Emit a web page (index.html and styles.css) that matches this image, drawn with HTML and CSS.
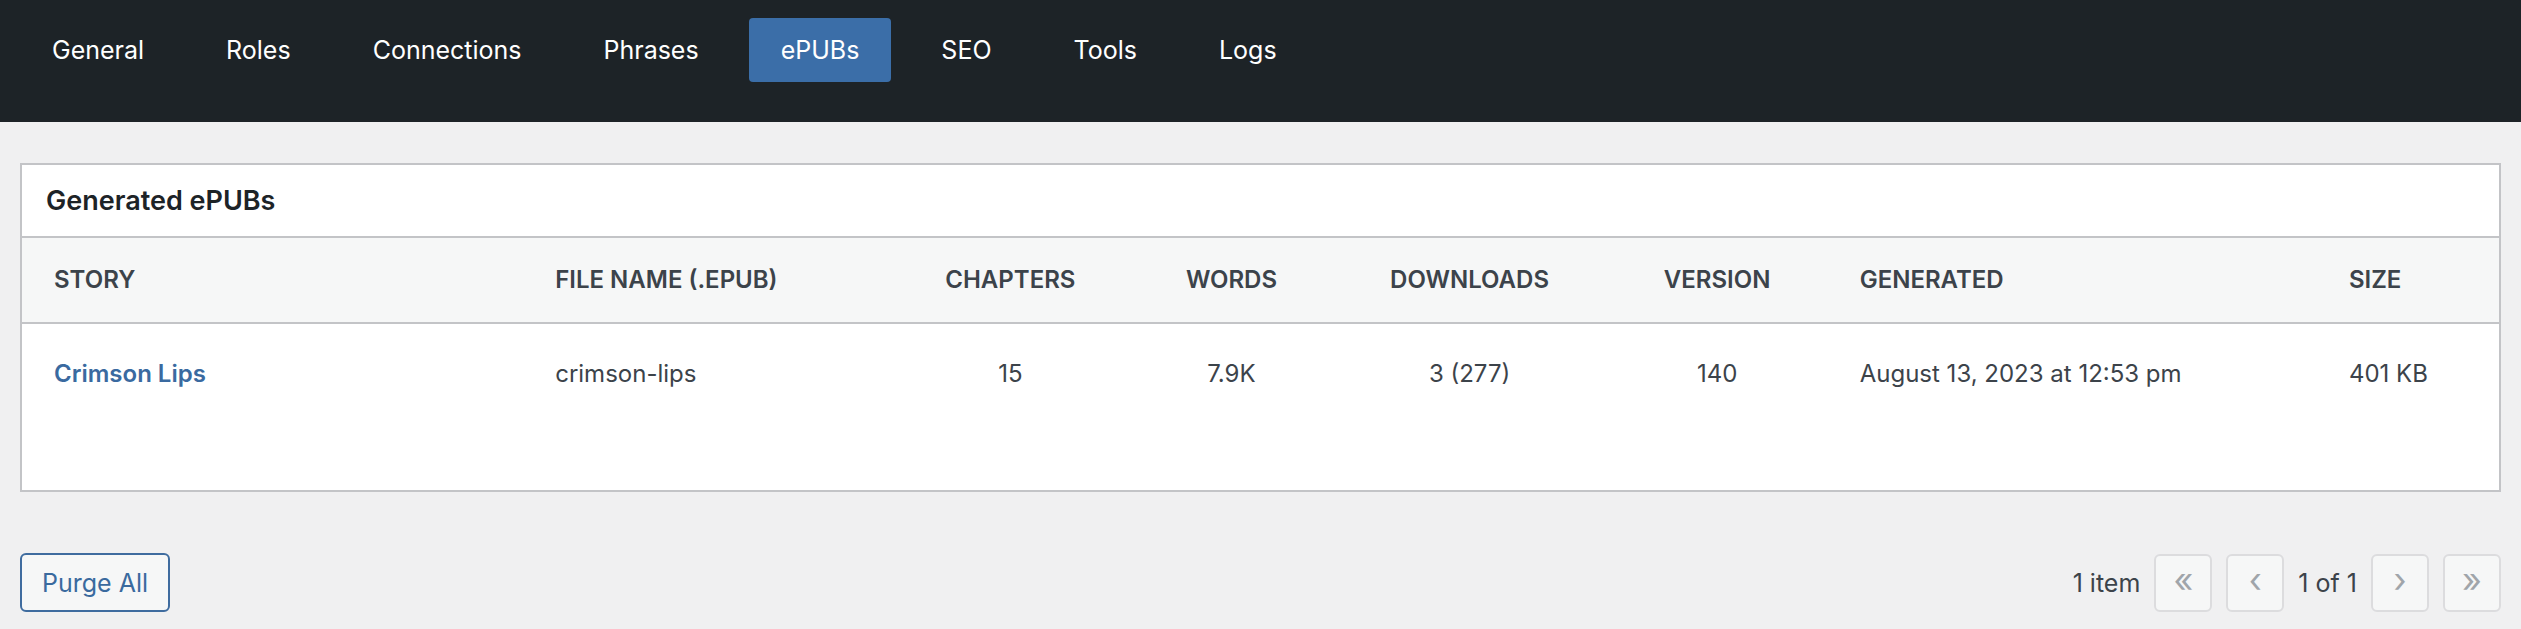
FILE: index.html
```html
<!DOCTYPE html>
<html lang="en">
<head>
<meta charset="utf-8">
<title>ePUBs</title>
<link rel="stylesheet" href="styles.css">
</head>
<body>
<nav class="tabs">
  <a class="tab">General</a>
  <a class="tab">Roles</a>
  <a class="tab">Connections</a>
  <a class="tab">Phrases</a>
  <a class="tab tab-active">ePUBs</a>
  <a class="tab">SEO</a>
  <a class="tab">Tools</a>
  <a class="tab">Logs</a>
</nav>
<main class="content">
  <section class="card">
    <h2 class="card-title">Generated ePUBs</h2>
    <table class="epub-table">
      <colgroup>
        <col class="c-story">
        <col class="c-file">
        <col class="c-chapters">
        <col class="c-words">
        <col class="c-downloads">
        <col class="c-version">
        <col class="c-generated">
        <col class="c-size">
      </colgroup>
      <thead>
        <tr>
          <th>STORY</th>
          <th>FILE NAME (.EPUB)</th>
          <th class="center">CHAPTERS</th>
          <th class="center">WORDS</th>
          <th class="center">DOWNLOADS</th>
          <th class="center">VERSION</th>
          <th>GENERATED</th>
          <th>SIZE</th>
        </tr>
      </thead>
      <tbody>
        <tr>
          <td><a class="story-link">Crimson Lips</a></td>
          <td>crimson-lips</td>
          <td class="center">15</td>
          <td class="center">7.9K</td>
          <td class="center">3 (277)</td>
          <td class="center">140</td>
          <td>August 13, 2023 at 12:53 pm</td>
          <td>401 KB</td>
        </tr>
      </tbody>
    </table>
  </section>
  <div class="footer-bar">
    <button class="btn-purge">Purge All</button>
    <div class="pagination">
      <span class="count">1 item</span>
      <span class="page-btn">«</span>
      <span class="page-btn">‹</span>
      <span class="page-of">1 of 1</span>
      <span class="page-btn">›</span>
      <span class="page-btn">»</span>
    </div>
  </div>
</main>
</body>
</html>
```

FILE: styles.css
```css
* {
  box-sizing: border-box;
}

html, body {
  margin: 0;
  padding: 0;
}

body {
  background: #f0f0f1;
  font-family: Inter, "Liberation Sans", sans-serif;
  color: #3c434a;
  overflow: hidden;
}

.tabs {
  background: #1d2327;
  height: 122px;
  display: flex;
  align-items: flex-start;
  gap: 18px;
  padding: 18px 20px 0;
}

.tab {
  display: block;
  height: 64px;
  line-height: 64px;
  padding: 0 32px;
  font-size: 25px;
  color: #ffffff;
  border-radius: 4px;
  text-decoration: none;
}

.tab-active {
  background: #3b6ea8;
}

.content {
  padding: 41px 20px 0 20px;
}

.card {
  background: #ffffff;
  border: 2px solid #c3c4c7;
  padding-bottom: 66px;
}

.card-title {
  margin: 0;
  padding: 18px 24px;
  line-height: 35px;
  font-size: 27px;
  font-weight: 600;
  color: #1d2327;
  border-bottom: 2px solid #c3c4c7;
}

.epub-table {
  width: 100%;
  border-collapse: collapse;
  table-layout: fixed;
}

.c-story { width: 501px; }
.c-file { width: 367px; }
.c-chapters { width: 240px; }
.c-words { width: 202px; }
.c-downloads { width: 274px; }
.c-version { width: 221px; }
.c-generated { width: 489px; }
.c-size { width: 182px; }

.epub-table th {
  background: #f6f7f7;
  text-align: left;
  font-size: 24px;
  font-weight: 600;
  color: #3c434a;
  line-height: 30px;
  padding: 27px 32px;
  border-bottom: 2px solid #c3c4c7;
  white-space: nowrap;
}

.epub-table td {
  text-align: left;
  font-size: 24px;
  line-height: 30px;
  padding: 35px 32px;
  color: #3c434a;
  white-space: nowrap;
}

.epub-table th.center,
.epub-table td.center {
  text-align: center;
  padding-left: 0;
  padding-right: 0;
}

.story-link {
  color: #3a6aa0;
  font-weight: 600;
  text-decoration: none;
}

.footer-bar {
  margin-top: 61px;
  display: flex;
  justify-content: space-between;
  align-items: center;
}

.btn-purge {
  height: 59px;
  padding: 0 20px;
  background: #f6f7f7;
  border: 2px solid #3f6c9f;
  border-radius: 6px;
  color: #3a6a9e;
  font-family: Inter, "Liberation Sans", sans-serif;
  font-size: 25px;
}

.pagination {
  display: flex;
  align-items: center;
  gap: 14px;
  font-size: 25px;
  color: #3c434a;
}

.page-btn {
  width: 58px;
  height: 58px;
  display: flex;
  align-items: center;
  justify-content: center;
  background: #f6f7f7;
  border: 2px solid #dcdcde;
  border-radius: 6px;
  color: #a0a5aa;
  font-size: 34px;
  line-height: 1;
  padding-bottom: 5px;
}
```
